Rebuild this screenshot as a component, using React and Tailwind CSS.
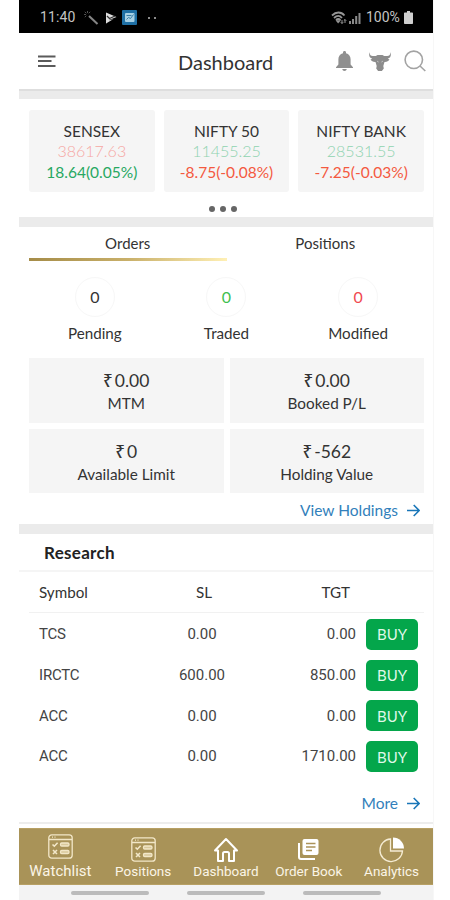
import React, { useState } from "react";

const indices = [
  { name: "SENSEX", value: "38617.63", change: "18.64(0.05%)", valueColor: "text-[#f5a7a3]", changeColor: "text-[#27a862]" },
  { name: "NIFTY 50", value: "11455.25", change: "-8.75(-0.08%)", valueColor: "text-[#8fd3b0]", changeColor: "text-[#f4593f]" },
  { name: "NIFTY BANK", value: "28531.55", change: "-7.25(-0.03%)", valueColor: "text-[#8fd3b0]", changeColor: "text-[#f4593f]" },
];

const orderCounts = [
  { label: "Pending", count: 0, color: "text-[#333]" },
  { label: "Traded", count: 0, color: "text-[#3fc04f]" },
  { label: "Modified", count: 0, color: "text-[#f04a50]" },
];

const balances = [
  { label: "MTM", value: "0.00" },
  { label: "Booked P/L", value: "0.00" },
  { label: "Available Limit", value: "0" },
  { label: "Holding Value", value: "-562" },
];

const research = [
  { id: 1, symbol: "TCS", sl: "0.00", tgt: "0.00" },
  { id: 2, symbol: "IRCTC", sl: "600.00", tgt: "850.00" },
  { id: 3, symbol: "ACC", sl: "0.00", tgt: "0.00" },
  { id: 4, symbol: "ACC", sl: "0.00", tgt: "1710.00" },
];

function StatusBar() {
  return (
    <div className="flex h-[33px] items-center bg-black pl-[21px] pr-[20px] pt-[2px] font-[Roboto,sans-serif] text-[14px] text-[#c4c4c4]">
      <span className="w-[37px] tracking-[0.1px]">11:40</span>
      <svg className="ml-[6px]" width="16" height="16" viewBox="0 0 16 16" fill="none" stroke="#858585">
        <path d="M6 6l8.5 8" strokeWidth="2" />
        <path d="M4.5 1v2M1 4.500h2M1.800 1.800l1.500 1.500M7.200 1.800l-1.500 1.500M1.800 7.200l1.500-1.500" strokeWidth="0.800" stroke="#666" />
      </svg>
      <svg className="ml-[6px]" width="12" height="12" viewBox="0 0 12 12">
        <path d="M1 .5L11.5 5 4 8 1 11.5z" fill="#dedede" />
        <path d="M2 4l2.500 2.500L10 4" fill="none" stroke="#333" strokeWidth="1.200" />
        <path d="M1 11.500V5l3.500 3.200L8.500 7z" fill="#dedede" />
      </svg>
      <svg className="ml-[5px]" width="15" height="15" viewBox="0 0 15 15">
        <rect width="15" height="15" rx="1" fill="#1f70a5" />
        <rect x="3" y="3" width="9.5" height="9" rx="1" fill="#a7d1e5" />
        <path d="M4.5 5.5h5M4.5 9.5l2-2 2 1 3-4" fill="none" stroke="#397fa9" />
      </svg>
      <span className="ml-[11px] flex gap-[4px]">
        <span className="size-[2px] rounded-full bg-[#bbb]" />
        <span className="size-[2px] rounded-full bg-[#bbb]" />
      </span>

      <svg className="ml-auto" width="16" height="14" viewBox="0 0 16 14" fill="none" stroke="#969696">
        <path d="M1 4.500c4-4 9-4 12.500 0M3 7c3-2.800 5.500-2.800 8 0M5 9c1.500-1.300 3-1.300 4.500 0" strokeWidth="1.800" />
        <path d="M7.200 12.200L5 9.500h4.500z" fill="#969696" strokeWidth="0.500" />
        <path d="M11 9v3.500M14 8.500V12M9.800 11.200l1.200 1.300 1.200-1.300M12.800 9.700L14 8.500l1.200 1.200" strokeWidth="1" />
      </svg>
      <svg className="ml-[2px]" width="12" height="12" viewBox="0 0 12 12" fill="#8a8a8a">
        <path d="M0 9h2v3H0zM3 7h2v5H3zM6.200 4h2v8h-2zM9.500 1h2v11h-2z" />
      </svg>
      <span className="ml-[5px] w-[35px]">100%</span>
      <svg className="ml-[3px]" width="9" height="13" viewBox="0 0 9 13" fill="#cfcfcf">
        <path d="M3 0h3v1.500h2.200q.8 0 .8.8v9.900q0 .8-.8.8H.8q-.8 0-.8-.8V2.300q0-.8.8-.8H3z" />
      </svg>
    </div>
  );
}

function Header() {
  return (
    <header className="flex h-[56px] items-center">
      <svg className="ml-[19px]" width="18" height="14" viewBox="0 0 18 14" stroke="#5b5b5b" strokeWidth="2">
        <path d="M0 2.500h17.500M0 7h13.500M0 12h17.500" />
      </svg>
      <h1 className="ml-[122px] mt-[2px] w-[100px] text-[20px] leading-6 text-[#333]">Dashboard</h1>
      <div className="ml-auto flex items-center pr-[7px]">
        <svg width="17" height="20" viewBox="0 0 17 20" fill="#8f8f8f">
          <path d="M8.500 0c1 0 1.500.6 1.500 1.500v.7c3 .7 4.600 3 4.600 6v5.200l2.400 2.900v.7H0v-.7l2.400-2.900V8.200c0-3 1.600-5.300 4.600-6v-.7C7 .6 7.500 0 8.500 0zM6.200 18h4.600c-.3 1.300-1.100 2-2.300 2s-2-.7-2.300-2z" />
        </svg>
        <svg className="ml-[16px]" width="22" height="19" viewBox="0 0 22 19" fill="#8c8c8c">
          <path d="M.8 0c-.2 2.600.7 3.900 3 4.100h3L8.500 3h5l1.700 1.100h3c2.300-.2 3.200-1.500 3-4.100 1.300 3 .7 5.600-2.500 6.800l1.800.8c-1 1.700-2.600 2.400-5 2.300L14.300 14l.5 2.500-1.900 2.500H9.100l-1.900-2.500.5-2.500-1.200-4.100c-2.400.1-4-.6-5-2.300l1.800-.8C.1 5.600-.5 3 .8 0z" />
          <path d="M8.200 9.200l1.300.8M13.800 9.200l-1.300.8" stroke="#ddd" strokeWidth=".8" />
        </svg>
        <svg className="ml-[13px]" width="22" height="22" viewBox="0 0 22 22" fill="none" stroke="#a3a3a3" strokeWidth="1.600">
          <circle cx="9.800" cy="9.800" r="8.700" />
          <path d="M16 16l5.300 5" />
        </svg>
      </div>
    </header>
  );
}

function Divider() {
  return <div className="h-[10px] shrink-0 bg-[#ebebeb]" />;
}

function Rupee() {
  return <span className="mr-[2px] font-['Noto_Sans',sans-serif] text-[17px] font-medium">₹</span>;
}

function ArrowLink({ children }) {
  return (
    <a className="flex items-center justify-end pr-[13px] text-[15.500px] leading-5 text-[#327fbb]">
      {children}
      <svg className="ml-[9px]" width="13" height="13" viewBox="0 0 13 13" fill="none" stroke="#1976b8" strokeWidth="1.600">
        <path d="M0 6.500h12M6.700 1l5.500 5.500L6.700 12" />
      </svg>
    </a>
  );
}

function ChecklistIcon() {
  return (
    <svg width="25" height="25" viewBox="0 0 25 25" fill="none" stroke="#f2e7c8" strokeWidth="1.300">
      <rect x=".8" y=".8" width="23.400" height="23.400" rx="3" />
      <path d="M1 5.500h23M4 3.200h1M6.500 3.200h1" />
      <path d="M4.500 10.500l1.800 1.700 3.300-3.500M5 16l4 4M9 16l-4 4" strokeWidth="1.600" />
      <rect x="12.500" y="9" width="8.500" height="3" rx="1.200" fill="#d9c99c" />
      <rect x="12.500" y="16.500" width="8.500" height="3" rx="1.200" fill="#d9c99c" />
    </svg>
  );
}

function HomeIcon() {
  return (
    <svg width="26" height="26" viewBox="0 0 26 26" fill="none" stroke="#fff" strokeWidth="2" strokeLinejoin="round">
      <path d="M2 13.500L13 2l11 11.500h-3V24h-5v-7.500q0-1.500-1.500-1.500h-3Q10 15 10 16.500V24H5V13.500z" />
    </svg>
  );
}

function OrderBookIcon() {
  return (
    <svg width="21" height="21" viewBox="0 0 21 21">
      <rect x="4.500" y="0" width="16" height="16" rx="2" fill="#fff" />
      <path d="M1 4v14q0 2 2 2h14" fill="none" stroke="#fff" strokeWidth="2" />
      <path d="M8 4.500h9.500M8 8h9.500M8 11.500h6" stroke="#ab935a" strokeWidth="1.600" />
    </svg>
  );
}

function AnalyticsIcon() {
  return (
    <svg width="26" height="26" viewBox="0 0 26 26">
      <path d="M11.500 2A11.300 11.300 0 1 0 23.500 14H11.500z" fill="none" stroke="#f5ecd4" strokeWidth="1.300" />
      <path d="M14 0.500A11 11 0 0 1 25 11.500H14z" fill="#fff" />
    </svg>
  );
}

const navItems = [
  { label: "Watchlist", icon: ChecklistIcon, text: "text-[15px]", pad: "pt-[5px]" },
  { label: "Positions", icon: ChecklistIcon, text: "text-[13.500px]", pad: "pt-[8px]" },
  { label: "Dashboard", icon: HomeIcon, text: "text-[13.500px]", pad: "pt-[8px]" },
  { label: "Order Book", icon: OrderBookIcon, text: "text-[13.500px]", pad: "pt-[10px]" },
  { label: "Analytics", icon: AnalyticsIcon, text: "text-[13.500px]", pad: "pt-[8px]" },
];

function BottomNav() {
  return (
    <nav className="grid h-[57px] grid-cols-5 border-y border-[#b7a064] bg-[#a99358] font-[Roboto,sans-serif] text-[#fbf5e6]">
      {navItems.map(({ label, icon: Icon, text, pad }) => (
        <button key={label} className={`flex h-[50px] flex-col items-center justify-between whitespace-nowrap ${pad}`}>
          <Icon />
          <span className={`${text} leading-[16px]`}>{label}</span>
        </button>
      ))}
    </nav>
  );
}

export default function App() {
  const [tab, setTab] = useState("Orders");

  return (
    <div className="h-[900px] w-[450px] overflow-hidden bg-white pl-[19px] pr-[16px] font-[Lato,sans-serif] text-[#333]">
      <div className="flex h-full flex-col border-r border-[#f7f7f7]">
        <StatusBar />
        <Header />
        <div className="h-[10px] shrink-0 border-t-2 border-[#dedede] bg-[#ebebeb]" />

        {/* Indices */}
        <section className="h-[118px] pt-[11px]">
          <div className="grid grid-cols-3 gap-[9px] pl-[10px] pr-[9px]">
            {indices.map((item) => (
              <div key={item.name} className="flex h-[82px] flex-col items-center rounded-[3px] bg-[#f5f5f5] pt-[11px] text-[15.500px] leading-5">
                <span>{item.name}</span>
                <span className={`text-[16px] font-light ${item.valueColor}`}>{item.value}</span>
                <span className={`mt-[1px] ${item.changeColor}`}>{item.change}</span>
              </div>
            ))}
          </div>
          <div className="mr-[6px] mt-[14px] flex justify-center gap-[5px]">
            <span className="size-[6px] rounded-full bg-[#666]" />
            <span className="size-[6px] rounded-full bg-[#666]" />
            <span className="size-[6px] rounded-full bg-[#666]" />
          </div>
        </section>
        <Divider />

        {/* Orders */}
        <section className="h-[297px] pl-[10px] pr-[9px]">
          <div className="grid grid-cols-2">
            {["Orders", "Positions"].map((name) => (
              <button key={name} onClick={() => setTab(name)} className="flex h-[34px] flex-col text-[15px]">
                <span className="block h-[31px] w-full pt-[6px] leading-5">{name}</span>
                {tab === name && (
                  <span className="block h-[3px] w-full bg-linear-to-r from-[#a58c48] via-[#c9b06a] to-[#fff0b5]" />
                )}
              </button>
            ))}
          </div>

          <div className="grid grid-cols-3 pt-[16px]">
            {orderCounts.map((item) => (
              <div key={item.label} className="flex flex-col items-center text-[15.200px]">
                <span className={`flex size-[40px] items-center justify-center rounded-full border border-[#f7f7f7] text-[16px] ${item.color}`}>
                  {item.count}
                </span>
                <span className="mt-[6px] leading-5">{item.label}</span>
              </div>
            ))}
          </div>

          <div className="mt-[15px] grid grid-cols-2 gap-x-[6px] gap-y-[6px]">
            {balances.map((item) => (
              <div key={item.label} className="flex h-[64.500px] flex-col items-center bg-[#f5f5f5] pt-[11px]">
                <span className="flex items-center text-[17.500px] leading-6">
                  <Rupee />
                  {item.value}
                </span>
                <span className="text-[15.300px] leading-[20px]">{item.label}</span>
              </div>
            ))}
          </div>
          <div className="-mr-[9px] pt-[7px]">
            <ArrowLink>View Holdings</ArrowLink>
          </div>
        </section>
        <Divider />

        {/* Research */}
        <section className="h-[288px]">
          <h2 className="h-[38px] border-b-2 border-[#f5f5f5] pl-[25px] pt-[9px] text-[17px] font-bold leading-5 tracking-[0.300px] text-[#222]">
            Research
          </h2>
          <div className="ml-[10px] mr-[9px] grid h-[41px] grid-cols-[122px_86px_110px_1fr] items-center border-b border-[#f1f1f1] pl-[10px] text-[15.200px]">
            <span>Symbol</span>
            <span className="text-center">SL</span>
            <span className="pr-[7px] text-right">TGT</span>
          </div>
          <div className="pt-[1px]">
            {research.map((row) => (
              <div key={row.id} className="ml-[20px] grid h-[40.750px] grid-cols-[120px_86px_111px_62px] items-center font-[Roboto,sans-serif] text-[15px] text-[#444]">
                <span className="tracking-[-0.200px]">{row.symbol}</span>
                <span className="text-center">{row.sl}</span>
                <span className="text-right">{row.tgt}</span>
                <button className="ml-[10px] h-[31px] w-[52px] rounded-[5px] bg-[#04a64b] font-[Lato,sans-serif] text-[15px] leading-[30px] text-[#dff8e8]">
                  BUY
                </button>
              </div>
            ))}
          </div>
          <div className="pt-[16px]">
            <ArrowLink>More</ArrowLink>
          </div>
        </section>

        <div className="h-[6px] border-t-2 border-[#ededed]" />
        <BottomNav />
        <div className="flex grow items-center justify-center gap-[38px] bg-[#f3f3f3]">
          <span className="h-[4px] w-[78px] rounded-full bg-[#bbb]" />
          <span className="h-[4px] w-[78px] rounded-full bg-[#bbb]" />
          <span className="h-[4px] w-[78px] rounded-full bg-[#bbb]" />
        </div>
      </div>
    </div>
  );
}
